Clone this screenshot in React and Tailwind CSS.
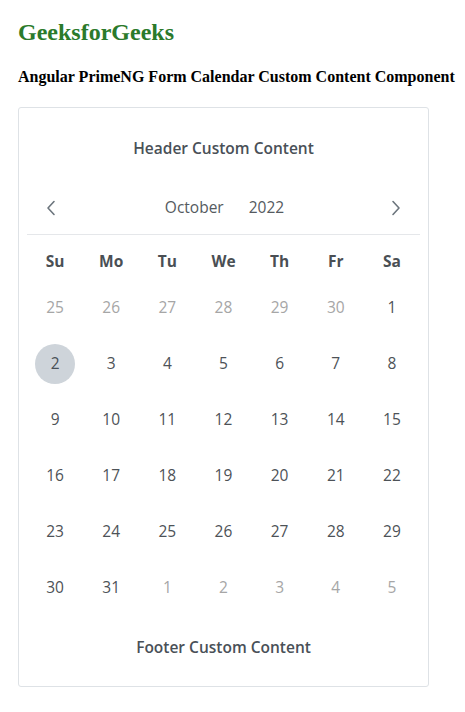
import React from "react";

const rows = [
  [[25, 1], [26, 1], [27, 1], [28, 1], [29, 1], [30, 1], [1, 0]],
  [[2, 0, 1], [3, 0], [4, 0], [5, 0], [6, 0], [7, 0], [8, 0]],
  [[9, 0], [10, 0], [11, 0], [12, 0], [13, 0], [14, 0], [15, 0]],
  [[16, 0], [17, 0], [18, 0], [19, 0], [20, 0], [21, 0], [22, 0]],
  [[23, 0], [24, 0], [25, 0], [26, 0], [27, 0], [28, 0], [29, 0]],
  [[30, 0], [31, 0], [1, 1], [2, 1], [3, 1], [4, 1], [5, 1]],
];

const days = ["Su", "Mo", "Tu", "We", "Th", "Fr", "Sa"];

export default function App() {
  return (
    <div className="min-h-[712px] w-[465px] bg-white px-[18px] pt-[17px]">
      <h2 className="text-[24px] font-bold leading-[30px] text-[#2b7a2b]" style={{ fontFamily: '"Liberation Serif", serif' }}>
        GeeksforGeeks
      </h2>
      <h4 className="mt-[20px] text-[16px] font-bold leading-[20px] text-black whitespace-nowrap" style={{ fontFamily: '"Liberation Serif", serif' }}>
        Angular PrimeNG Form Calendar Custom Content Component
      </h4>
      <div
        className="mt-[20px] w-[411px] rounded-[3px] border border-[#dee2e6] bg-white px-2 pt-[10px] pb-[14px] text-[#495057]"
        style={{ fontFamily: '"Open Sans", "Noto Sans", sans-serif' }}
      >
        <div className="flex h-[66px] items-center justify-center pb-[5px] text-[15.5px] font-semibold">
          Header Custom Content
        </div>
        <div className="flex h-[51px] items-center justify-between border-b border-[#e5e7ea] px-2 pb-[2px]">
          <div className="flex h-8 w-8 items-center justify-center text-[#6c757d]">
            <svg width="10" height="16" viewBox="0 0 10 16" fill="none" stroke="currentColor" strokeWidth="1.6" strokeLinecap="round" strokeLinejoin="round">
              <polyline points="8,1.5 2,8 8,14.5" />
            </svg>
          </div>
          <div className="flex items-center gap-[25px] pl-[2px] text-[15.5px] font-normal text-[#555a60]">
            <span>October</span>
            <span>2022</span>
          </div>
          <div className="flex h-8 w-8 items-center justify-center text-[#6c757d]">
            <svg width="10" height="16" viewBox="0 0 10 16" fill="none" stroke="currentColor" strokeWidth="1.6" strokeLinecap="round" strokeLinejoin="round">
              <polyline points="2,1.5 8,8 2,14.5" />
            </svg>
          </div>
        </div>
        <div className="mt-[9px] grid grid-cols-7">
          {days.map((d) => (
            <div key={d} className="flex h-[36px] items-center justify-center text-[15.5px] font-bold text-[#4a4f54]">
              {d}
            </div>
          ))}
        </div>
        {rows.map((r, i) => (
          <div key={i} className="grid grid-cols-7">
            {r.map(([n, other, today], j) => (
              <div key={j} className="flex h-[56px] items-center justify-center">
                <span
                  className={
                    "flex h-10 w-10 items-center justify-center rounded-full text-[15.5px] " +
                    (today ? "bg-[#ced4da] text-[#495057]" : other ? "text-[#a6a6a6]" : "text-[#4d5257]")
                  }
                >
                  {n}
                </span>
              </div>
            ))}
          </div>
        ))}
        <div className="flex h-[56px] items-center justify-center pt-[8px] text-[15.5px] font-semibold">
          Footer Custom Content
        </div>
      </div>
    </div>
  );
}
